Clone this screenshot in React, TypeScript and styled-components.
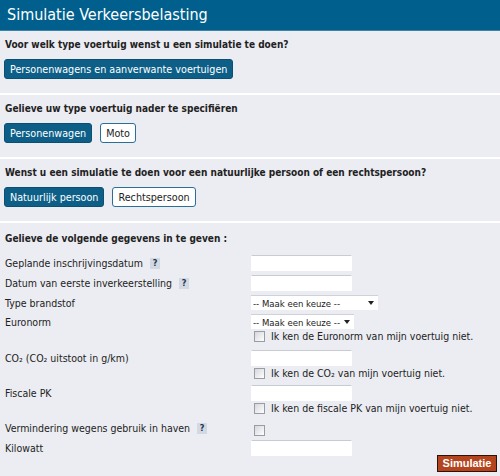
import * as React from "react"
import styled, { createGlobalStyle } from "styled-components"

const GlobalStyle = createGlobalStyle`
  body {
    margin: 0;
    background: #ecedf2;
    font-family: "DejaVu Sans Condensed", "DejaVu Sans", Verdana, sans-serif;
    font-size: 10.5px;
    color: #222;
  }
`

const Page = styled.div`
  width: 500px;
  height: 476px;
  background: #ecedf2;
  overflow: hidden;
`

const Header = styled.h1`
  margin: 0;
  height: 31px;
  box-sizing: border-box;
  padding: 5px 7px 0;
  background: #005f8d;
  border-bottom: 1px solid #3f84a6;
  color: #fff;
  font-family: "DejaVu Sans Condensed", "DejaVu Sans", sans-serif;
  font-size: 16px;
  font-weight: normal;
  line-height: 20px;
`

const Section = styled.section`
  padding: 7px 4px 14px;
  border-bottom: 2px solid #fff;
`

const Question = styled.div`
  font-size: 10px;
  font-weight: bold;
  margin: 0 1px 7px;
  line-height: 14px;
`

const ButtonRow = styled.div`
  display: flex;
  gap: 8px;
`

const Choice = styled.button<{ $active?: boolean }>`
  font-family: inherit;
  font-size: 10.7px;
  height: 20px;
  padding: 0 5px;
  border-radius: 3px;
  border: 1px solid ${p => (p.$active ? "#0b4f73" : "#2a6f96")};
  background: ${p => (p.$active ? "#0e5f88" : "#fff")};
  color: ${p => (p.$active ? "#fff" : "#222")};
`

const Form = styled.div`
  padding: 9px 3px 0 5px;
`

const FormTitle = styled.div`
  font-size: 10px;
  font-weight: bold;
  line-height: 14px;
  margin-bottom: 9px;
`

const Row = styled.div<{ $after?: number }>`
  display: grid;
  grid-template-columns: 246px 1fr;
  margin-bottom: ${p => p.$after ?? 4}px;
`

const Label = styled.div<{ $h?: number }>`
  display: flex;
  align-items: center;
  gap: 7px;
  height: ${p => p.$h ?? 16}px;
`

const Field = styled.div`
  display: flex;
  flex-direction: column;
  gap: 1px;
`

const TextInput = styled.input`
  width: 101px;
  height: 16px;
  box-sizing: border-box;
  border: 1px solid #fff;
  border-top-color: #c9cbd2;
  background: #fff;
  padding: 0 2px;
`

const Select = styled.div<{ $width: number }>`
  width: ${p => p.$width}px;
  height: 15px;
  box-sizing: border-box;
  background: #fff;
  border-top: 1px solid #cfd1d8;
  display: flex;
  align-items: center;
  justify-content: space-between;
  padding: 0 4px 0 2px;
  font-size: 9.5px;
  white-space: nowrap;
  color: #222;
`

const Caret = styled.span`
  width: 0;
  height: 0;
  border-left: 3px solid transparent;
  border-right: 3px solid transparent;
  border-top: 4px solid #222;
`

const CheckLine = styled.label<{ $tall?: boolean }>`
  display: flex;
  align-items: ${p => (p.$tall ? "flex-end" : "center")};
  gap: 6px;
  padding-left: 3px;
  height: ${p => (p.$tall ? 16 : 12)}px;
`

const Box = styled.span`
  flex: none;
  width: 9px;
  height: 9px;
  border: 1px solid #9a9ca3;
  background: linear-gradient(135deg, #d6d7dd, #fff);
`

const Help = styled.span`
  display: inline-flex;
  align-items: center;
  justify-content: center;
  width: 10px;
  height: 11px;
  background: #d3d9e3;
  color: #1d3550;
  font-weight: bold;
  font-size: 9px;
`

const Footer = styled.div`
  display: flex;
  justify-content: flex-end;
  margin-top: -1px;
`

const Submit = styled.button`
  font-family: "Liberation Sans", Arial, sans-serif;
  font-size: 11px;
  font-weight: bold;
  color: #fff;
  background: #b4441d;
  border: 1px solid #2e1208;
  width: 60px;
  height: 17px;
  padding: 0;
  line-height: 15px;
`

const sub = "\u2082"

export default function App() {
  return (
    <Page>
      <GlobalStyle />
      <Header>Simulatie Verkeersbelasting</Header>

      <Section>
        <Question>Voor welk type voertuig wenst u een simulatie te doen?</Question>
        <ButtonRow>
          <Choice $active>Personenwagens en aanverwante voertuigen</Choice>
        </ButtonRow>
      </Section>

      <Section>
        <Question>Gelieve uw type voertuig nader te specifiëren</Question>
        <ButtonRow>
          <Choice $active>Personenwagen</Choice>
          <Choice>Moto</Choice>
        </ButtonRow>
      </Section>

      <Section>
        <Question>Wenst u een simulatie te doen voor een natuurlijke persoon of een rechtspersoon?</Question>
        <ButtonRow>
          <Choice $active>Natuurlijk persoon</Choice>
          <Choice>Rechtspersoon</Choice>
        </ButtonRow>
      </Section>

      <Form>
        <FormTitle>Gelieve de volgende gegevens in te geven :</FormTitle>
        <Row>
          <Label>Geplande inschrijvingsdatum <Help>?</Help></Label>
          <Field><TextInput /></Field>
        </Row>
        <Row>
          <Label>Datum van eerste inverkeerstelling <Help>?</Help></Label>
          <Field><TextInput /></Field>
        </Row>
        <Row>
          <Label $h={15}>Type brandstof</Label>
          <Field><Select $width={127}>-- Maak een keuze --<Caret /></Select></Field>
        </Row>
        <Row $after={8}>
          <Label $h={15}>Euronorm</Label>
          <Field>
            <Select $width={103}>-- Maak een keuze --<Caret /></Select>
            <CheckLine><Box />Ik ken de Euronorm van mijn voertuig niet.</CheckLine>
          </Field>
        </Row>
        <Row $after={6}>
          <Label>CO{sub} (CO{sub} uitstoot in g/km)</Label>
          <Field>
            <TextInput />
            <CheckLine><Box />Ik ken de CO{sub} van mijn voertuig niet.</CheckLine>
          </Field>
        </Row>
        <Row $after={6}>
          <Label>Fiscale PK</Label>
          <Field>
            <TextInput />
            <CheckLine><Box />Ik ken de fiscale PK van mijn voertuig niet.</CheckLine>
          </Field>
        </Row>
        <Row>
          <Label>Vermindering wegens gebruik in haven <Help>?</Help></Label>
          <Field><CheckLine $tall><Box /></CheckLine></Field>
        </Row>
        <Row $after={0}>
          <Label>Kilowatt</Label>
          <Field><TextInput /></Field>
        </Row>
        <Footer>
          <Submit>Simulatie</Submit>
        </Footer>
      </Form>
    </Page>
  )
}
